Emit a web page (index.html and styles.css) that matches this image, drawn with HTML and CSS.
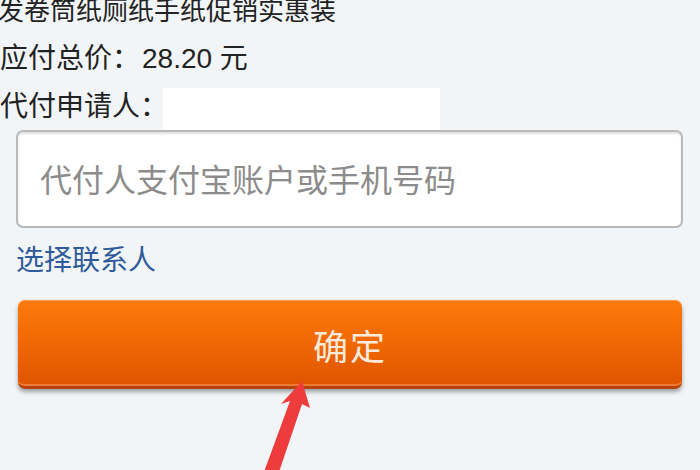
FILE: index.html
```html
<!DOCTYPE html>
<html lang="zh-CN">

<head>
    <meta charset="UTF-8">
    <title>找人代付</title>
    <link rel="stylesheet" href="styles.css">
</head>

<body>
    <div class="pay_wrap">
        <!-- 订单信息 -->
        <div class="pay_info">
            <p class="pay_goods">发卷筒纸厕纸手纸促销实惠装</p>
            <p>应付总价：<span class="pay_price">28.20 元</span></p>
            <p>代付申请人：<span class="pay_name"></span></p>
        </div>
        <!-- 代付人账户 -->
        <div class="pay_form">
            <input type="text" class="pay_input" placeholder="代付人支付宝账户或手机号码">
            <a href="javascript:;" class="pay_contact">选择联系人</a>
            <button type="button" class="pay_btn">确定</button>
        </div>
        <!-- 标注箭头 -->
        <svg class="pay_arrow" width="700" height="470" viewBox="0 0 700 470">
            <polygon points="302,381 310,408 302,404 279,472 264,472 290,401 281,404" fill="#ee3b3b" />
        </svg>
    </div>
</body>

</html>
```

FILE: styles.css
```css
* {
    margin: 0;
    padding: 0;
}

html,
body {
    background-color: #f1f5f8;
}

.pay_wrap {
    width: 700px;
    height: 470px;
    overflow: hidden;
    position: relative;
    font-family: "Liberation Sans", "Noto Sans CJK SC", sans-serif;
    color: #222;
}

/*订单信息*/
.pay_info {
    padding-top: 1px;
    margin-top: -13px;
}

.pay_info p {
    font-size: 28px;
    line-height: 48px;
}

.pay_info .pay_goods {
    margin-left: -2px;
    font-size: 26px;
    line-height: 47px;
}

.pay_price {
    margin-left: 2px;
}

.pay_name {
    display: inline-block;
    width: 277px;
    height: 42px;
    margin-left: -5px;
    vertical-align: middle;
    background-color: #fff;
}

/*代付人账户*/
.pay_form {
    padding: 0 17px 0 16px;
}

.pay_input {
    display: block;
    box-sizing: border-box;
    width: 100%;
    height: 98px;
    margin-top: -1px;
    padding-left: 22px;
    padding-top: 4px;
    border: 2px solid #b9b9b9;
    border-radius: 7px;
    background-color: #fff;
    box-shadow: inset 0 2px 2px rgba(0, 0, 0, 0.12);
    font-family: "Liberation Sans", "Noto Sans CJK SC", sans-serif;
    font-size: 32px;
    outline: none;
}

.pay_input::placeholder {
    color: #8c8c8c;
}

.pay_contact {
    display: block;
    margin-top: 9px;
    font-size: 28px;
    line-height: 48px;
    color: #2f5a9c;
    text-decoration: none;
}

.pay_btn {
    display: block;
    width: 664px;
    height: 89px;
    margin: 15px 0 0 2px;
    padding-top: 2px;
    border: none;
    border-radius: 7px;
    border-bottom: 3px solid #b64300;
    background: linear-gradient(#fb7a0c, #f26a05 45%, #df5400);
    box-shadow: inset 0 1px 0 #ffa055, inset 0 -2px 0 #ef7a35, 0 3px 4px rgba(0, 0, 0, 0.35);
    color: #fcebdc;
    font-family: "Noto Sans CJK SC", sans-serif;
    font-size: 35px;
    letter-spacing: 2px;
}

/*标注箭头*/
.pay_arrow {
    position: absolute;
    left: 0;
    top: 0;
    pointer-events: none;
}
```
